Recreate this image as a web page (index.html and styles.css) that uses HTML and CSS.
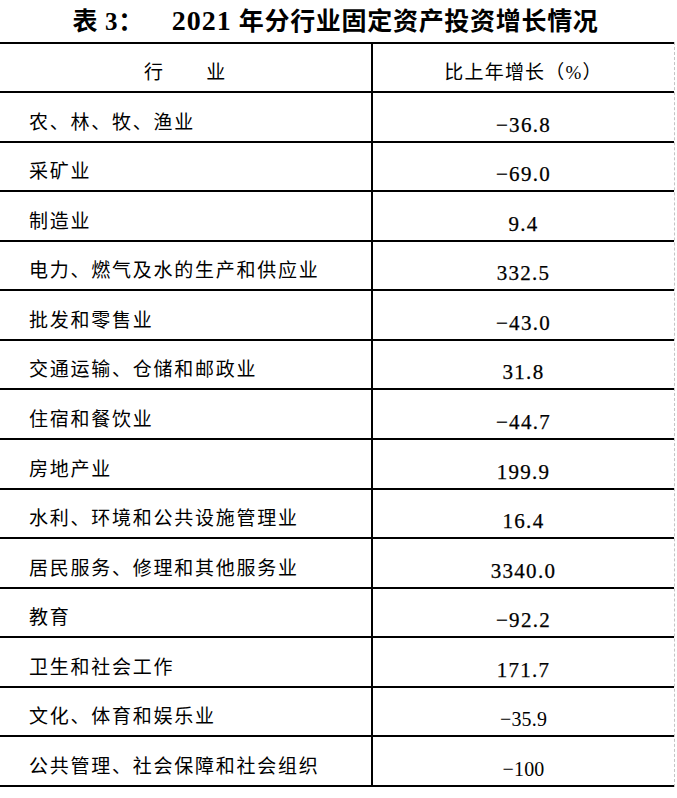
FILE: index.html
```html
<!DOCTYPE html>
<html lang="zh-CN">
<head>
<meta charset="utf-8">
<title>表3 2021年分行业固定资产投资增长情况</title>
<link rel="stylesheet" href="styles.css">
</head>
<body>
<h1 class="title">表 3：    <span class="yr">2021</span> 年分行业固定资产投资增长情况</h1>
<div class="table">
  <div class="row head">
    <div class="cell name center">行　　业</div>
    <div class="cell val head-val">比上年增长（%）</div>
  </div>
  <div class="row"><div class="cell name">农、林、牧、渔业</div><div class="cell val">−36.8</div></div>
  <div class="row"><div class="cell name">采矿业</div><div class="cell val">−69.0</div></div>
  <div class="row"><div class="cell name">制造业</div><div class="cell val">9.4</div></div>
  <div class="row"><div class="cell name">电力、燃气及水的生产和供应业</div><div class="cell val">332.5</div></div>
  <div class="row"><div class="cell name">批发和零售业</div><div class="cell val">−43.0</div></div>
  <div class="row"><div class="cell name">交通运输、仓储和邮政业</div><div class="cell val">31.8</div></div>
  <div class="row"><div class="cell name">住宿和餐饮业</div><div class="cell val">−44.7</div></div>
  <div class="row"><div class="cell name">房地产业</div><div class="cell val">199.9</div></div>
  <div class="row"><div class="cell name">水利、环境和公共设施管理业</div><div class="cell val">16.4</div></div>
  <div class="row"><div class="cell name">居民服务、修理和其他服务业</div><div class="cell val">3340.0</div></div>
  <div class="row"><div class="cell name">教育</div><div class="cell val">−92.2</div></div>
  <div class="row"><div class="cell name">卫生和社会工作</div><div class="cell val">171.7</div></div>
  <div class="row"><div class="cell name">文化、体育和娱乐业</div><div class="cell val thin">−35.9</div></div>
  <div class="row"><div class="cell name">公共管理、社会保障和社会组织</div><div class="cell val thin">−100</div></div>
</div>
</body>
</html>
```
FILE: styles.css
```css
html, body {
  margin: 0;
  padding: 0;
  background: #fff;
}
body {
  width: 677px;
  font-family: "Liberation Serif", "Noto Sans CJK SC", serif;
  color: #000;
}
.title {
  margin: 0;
  height: 42px;
  line-height: 42px;
  font-size: 25px;
  font-weight: 700;
  letter-spacing: 0.7px;
  text-align: center;
  padding-right: 6px;
  white-space: pre;
  box-sizing: border-box;
}
.title .yr {
  font-size: 28px;
  letter-spacing: 1px;
}
.table {
  width: 674px;
  border-right: 1px dashed #c4c4c4;
}
.row {
  display: grid;
  grid-template-columns: 373px 1fr;
  height: 49.57px;
  border-bottom: 2px solid #000;
  box-sizing: border-box;
}
.row.head {
  height: 51px;
  border-top: 2px solid #000;
}
.cell {
  display: flex;
  align-items: flex-end;
  box-sizing: border-box;
}
.name {
  border-right: 2px solid #000;
  padding: 0 0 9px 29px;
  font-size: 19px;
  line-height: 19px;
  letter-spacing: 1.75px;
}
.name.center {
  justify-content: center;
  padding-left: 0;
}
.val {
  justify-content: center;
  padding-bottom: 6px;
  font-size: 21px;
  line-height: 20px;
  letter-spacing: 1.3px;
  -webkit-text-stroke: 0.25px #000;
}
.val.head-val {
  font-size: 19px;
  line-height: 19px;
  letter-spacing: 1.2px;
  padding-bottom: 9px;
  -webkit-text-stroke: 0;
}
.val.thin {
  letter-spacing: 0.2px;
  -webkit-text-stroke: 0;
  transform: scaleX(0.95);
}
```
